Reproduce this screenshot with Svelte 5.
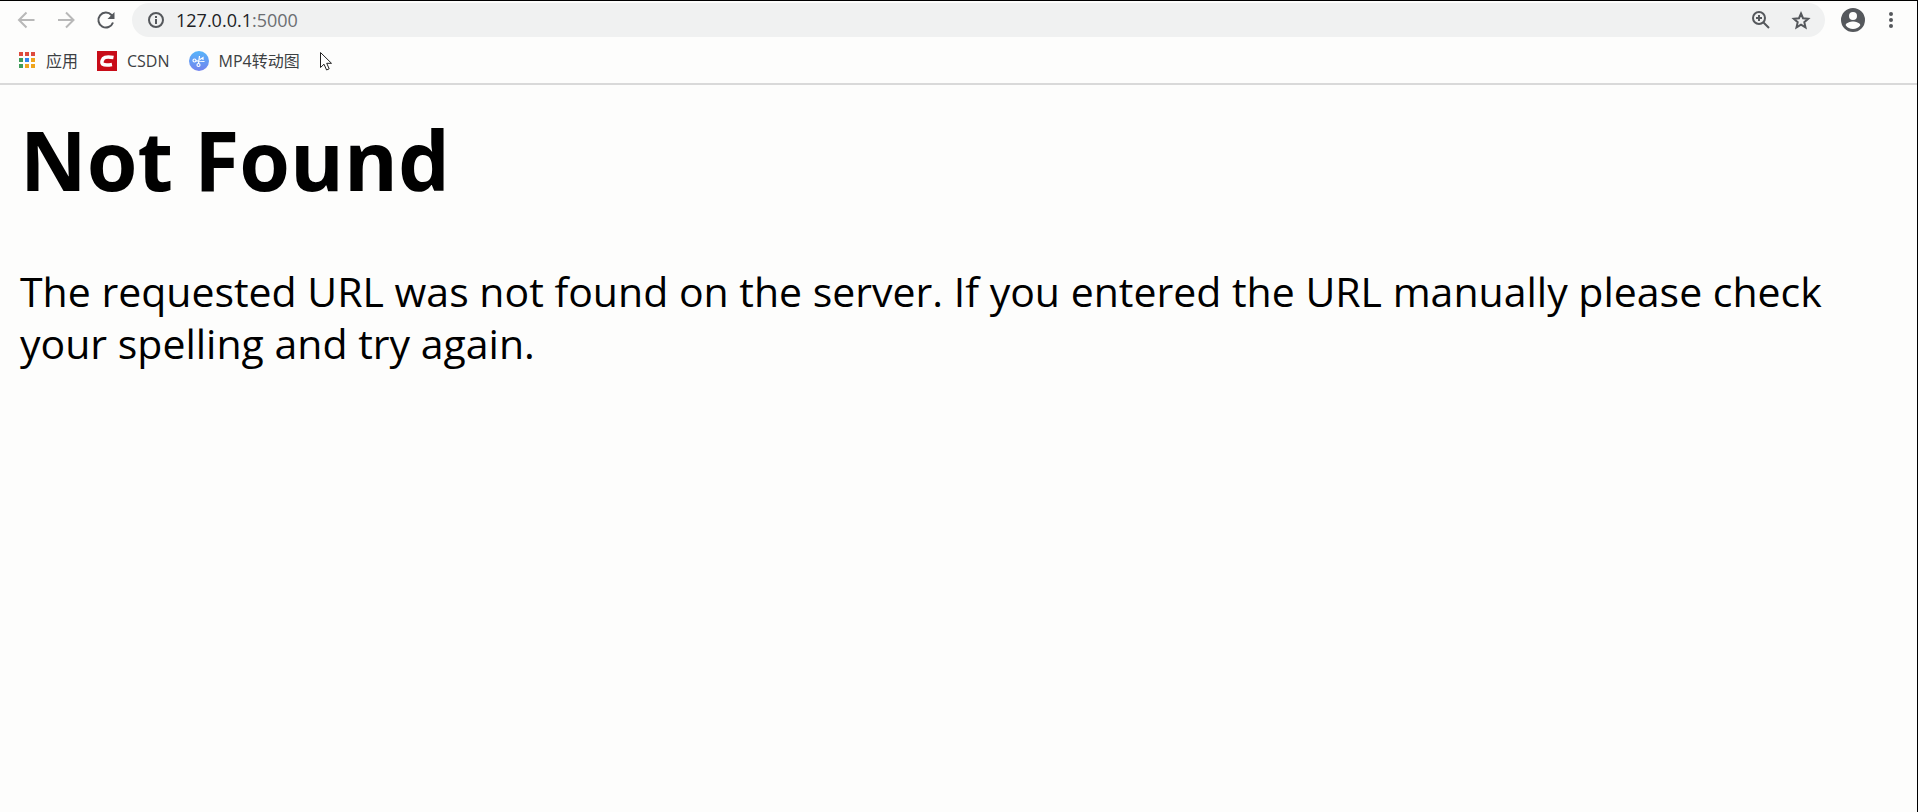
<script>
  let url = $state("127.0.0.1:5000");

  const host = $derived(url.split(":")[0]);
  const port = $derived(url.slice(host.length));

  const dots = [
    "#dd4b3e", "#dd4b3e", "#dd4b3e",
    "#3f9d5a", "#2f86ee", "#efa51d",
    "#3f9d5a", "#efa51d", "#efa51d",
  ];
</script>

<div class="window">
  <header>
    <nav class="toolbar" aria-label="Browser toolbar">
      <div class="group">
        <button class="icon" type="button" aria-label="Back" disabled>
          <svg viewBox="0 0 20 20"><path d="M18.500 10H3M10.500 2.500L3 10l7.500 7.500" /></svg>
        </button>
        <button class="icon" type="button" aria-label="Forward" disabled>
          <svg viewBox="0 0 20 20"><path d="M2 10h15.500M10 2.500l7.500 7.500-7.500 7.500" /></svg>
        </button>
        <button class="icon" type="button" aria-label="Reload">
          <svg viewBox="0 0 20 20">
            <path d="M17 12.500A7.500 7.500 0 1 1 15.500 5L17 6.500" />
            <path class="solid" d="M18.500 2v7h-7z" />
          </svg>
        </button>
      </div>
      <div class="omnibox">
        <button class="icon" type="button" aria-label="Site information">
          <svg viewBox="0 0 20 20">
            <circle cx="10" cy="10" r="7" />
            <path d="M10 9v5M10 6v2" />
          </svg>
        </button>
        <a class="address" href={`http://${url}`}>{host}<span>{port}</span></a>
        <div class="group">
          <button class="icon" type="button" aria-label="Zoom">
            <svg viewBox="0 0 20 20">
              <circle cx="8" cy="8" r="6" />
              <path d="M12.500 12.500L18 18M5 8h6M8 5v6" />
            </svg>
          </button>
          <button class="icon" type="button" aria-label="Bookmark this page">
            <svg viewBox="0 0 20 20">
              <path d="M10 3.500l2 4.700 5.200.5-3.900 3.500 1.200 5.200L10 14.700l-4.500 2.700 1.200-5.200-3.900-3.500L8 8.200z" />
            </svg>
          </button>
        </div>
      </div>
      <button class="icon profile" type="button" aria-label="Profile">
        <svg viewBox="0 0 24 24">
          <path class="solid" fill-rule="evenodd" d="M12 0a12 12 0 1 0 0 24 12 12 0 0 0 0-24zm0 4a4 4 0 1 1 0 8 4 4 0 0 1 0-8zm0 17a9 9 0 0 1-7.300-3.800c.1-2.400 4.900-3.700 7.300-3.700s7.200 1.300 7.300 3.700A9 9 0 0 1 12 21z" />
        </svg>
      </button>
      <button class="icon" type="button" aria-label="Menu">
        <svg viewBox="0 0 20 20">
          <circle class="solid" cx="10" cy="4" r="2" />
          <circle class="solid" cx="10" cy="10" r="2" />
          <circle class="solid" cx="10" cy="16" r="2" />
        </svg>
      </button>
    </nav>

    <nav class="bookmarks" aria-label="Bookmarks">
      <a href="#apps">
        <svg viewBox="0 0 20 20">
          {#each dots as fill, i}
            <rect x={3 + (i % 3) * 6} y={1 + Math.floor(i / 3) * 6} width="4" height="4" {fill} />
          {/each}
        </svg>
        应用
      </a>
      <a href="#csdn">
        <svg viewBox="0 0 20 20">
          <rect width="20" height="20" fill="#c80c18" />
          <path d="M16.500 6.500Q8.500 5 6.300 7.500Q4 11 5.500 13Q8 14.800 15 13.500" fill="none" stroke="#fff" stroke-width="3.500" />
        </svg>
        CSDN
      </a>
      <a href="#mp4">
        <svg viewBox="0 0 20 20">
          <defs>
            <linearGradient id="disc" x1="0" y1="0" x2="0" y2="1">
              <stop offset="0" stop-color="#55b4fa" />
              <stop offset="1" stop-color="#7383ee" />
            </linearGradient>
          </defs>
          <circle cx="10" cy="10" r="10" fill="url(#disc)" />
          <g fill="none" stroke="#fff" stroke-width="1.200">
            <circle cx="5.500" cy="9.500" r="1.500" />
            <circle cx="9.500" cy="14" r="1.500" />
            <path d="M7 9.800L15.500 10.500M9.500 12.500L10.500 5M11 8.500L14 6.500v2.500" />
          </g>
        </svg>
        MP4转动图
      </a>
      <svg class="pointer" viewBox="0 0 14 20">
        <path d="M1.500 1.500v15l3.500-3.300 2.600 5.800 2.600-1.200-2.500-5.500h4.800z" />
      </svg>
    </nav>
  </header>

  <main>
    <h1>Not Found</h1>
    <p>
      The requested URL was not found on the server. If you entered the URL
      manually please check your spelling and try again.
    </p>
  </main>
</div>

<style>
  :global(body) {
    margin: 0;
    background: #fdfdfc;
  }

  .window {
    box-sizing: border-box;
    min-height: 100vh;
    border-top: 1px solid #000;
    border-right: 1px solid #000;
    font-family: "Open Sans", "Noto Sans CJK SC", sans-serif;
    color: #000;
  }

  header {
    border-bottom: 2px solid #d9d9d9;
  }

  svg {
    display: block;
    flex: none;
    width: 20px;
    height: 20px;
  }

  .toolbar {
    display: flex;
    align-items: center;
    gap: 16px;
    height: 38px;
    padding: 0 16px;
  }

  .group {
    display: flex;
    gap: 20px;
  }

  .icon {
    flex: none;
    padding: 0;
    border: 0;
    background: none;
    color: #55585c;
    cursor: pointer;
  }
  .icon:disabled {
    color: #b8b8b8;
    cursor: default;
  }
  .icon svg {
    fill: none;
    stroke: currentColor;
    stroke-width: 2;
  }
  .icon .solid {
    fill: currentColor;
    stroke: none;
  }
  .profile svg {
    width: 24px;
    height: 24px;
  }

  .omnibox {
    display: flex;
    flex: 1;
    align-items: center;
    gap: 10px;
    height: 34px;
    padding: 0 14px;
    border-radius: 17px;
    background: #f0f1f1;
  }

  .address {
    flex: 1;
    font-size: 18px;
    line-height: 24px;
    text-decoration: none;
    color: #202124;
  }
  .address span {
    color: #6b6e72;
  }

  .bookmarks {
    display: flex;
    align-items: center;
    gap: 19px;
    height: 44px;
    padding: 0 16px;
  }
  .bookmarks a {
    display: flex;
    align-items: center;
    gap: 10px;
    font-size: 16px;
    line-height: 20px;
    text-decoration: none;
    color: #3c4043;
  }
  .pointer {
    width: 14px;
    fill: #fff;
    stroke: #222;
    stroke-width: 1;
  }

  main {
    padding: 18px 20px;
  }
  h1 {
    margin: 0 0 50px;
    font-size: 82px;
    line-height: 112px;
  }
  p {
    margin: 0;
    font-size: 41px;
    line-height: 52px;
  }
</style>
